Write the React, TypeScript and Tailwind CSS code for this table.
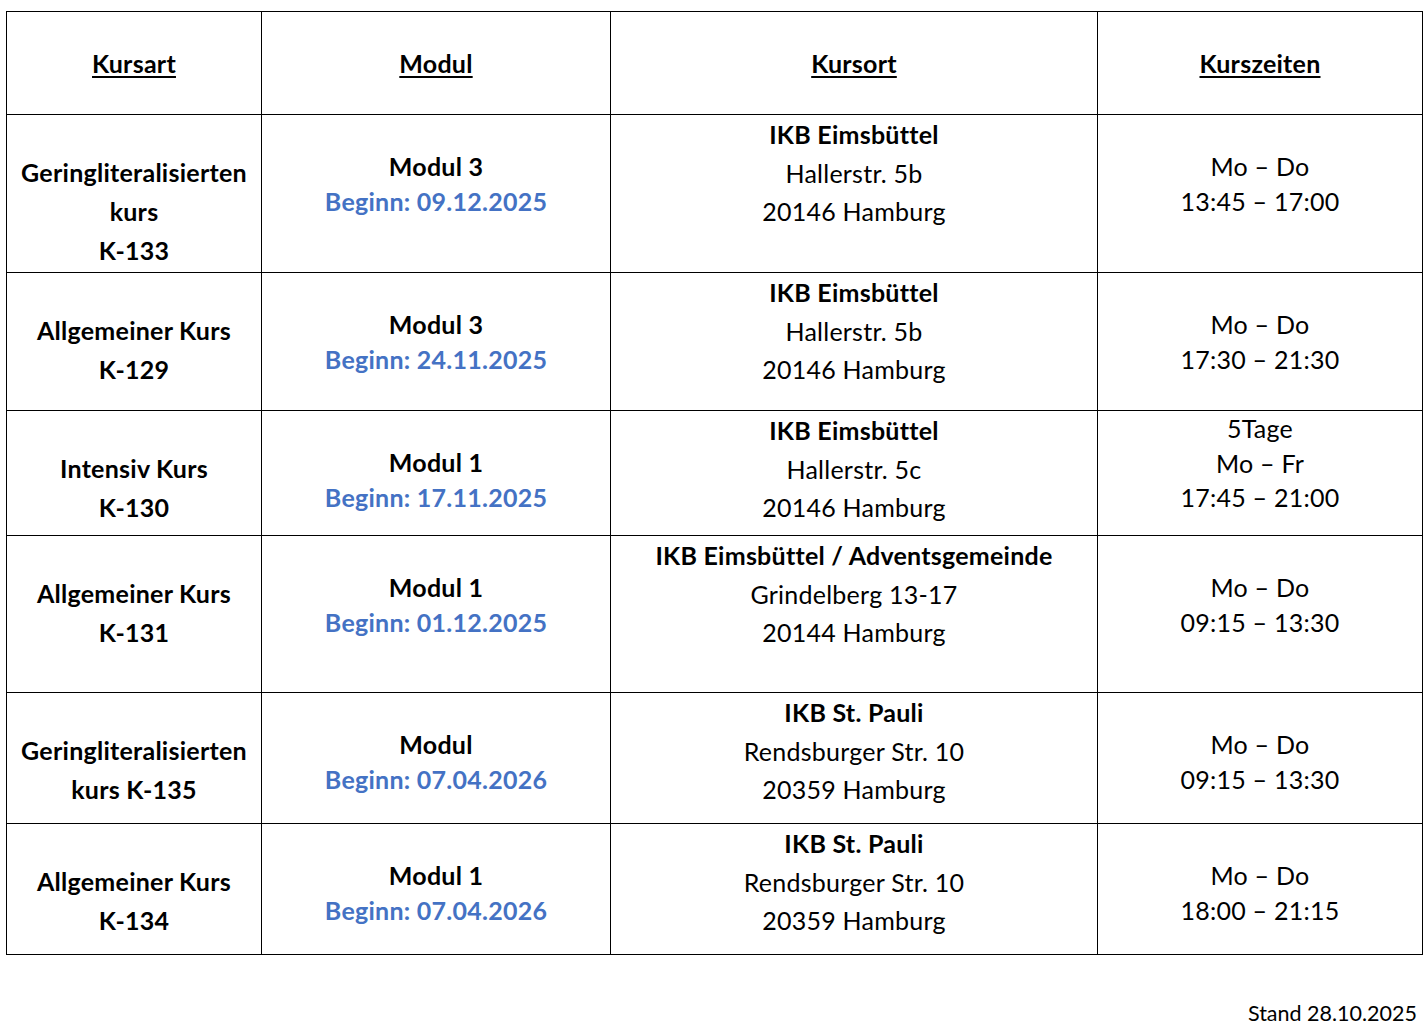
import React from "react";

type Row = {
  h: string;
  c1: string[];
  modul: string;
  beginn: string;
  ort: [string, string, string];
  zeiten: string[];
};

const rows: Row[] = [
  { h: "h-[158px]", c1: ["Geringliteralisierten", "kurs", "K-133"], modul: "Modul 3", beginn: "Beginn: 09.12.2025", ort: ["IKB Eimsbüttel", "Hallerstr. 5b", "20146 Hamburg"], zeiten: ["Mo – Do", "13:45 – 17:00"] },
  { h: "h-[138px]", c1: ["Allgemeiner Kurs", "K-129"], modul: "Modul 3", beginn: "Beginn: 24.11.2025", ort: ["IKB Eimsbüttel", "Hallerstr. 5b", "20146 Hamburg"], zeiten: ["Mo – Do", "17:30 – 21:30"] },
  { h: "h-[125px]", c1: ["Intensiv Kurs", "K-130"], modul: "Modul 1", beginn: "Beginn: 17.11.2025", ort: ["IKB Eimsbüttel", "Hallerstr. 5c", "20146 Hamburg"], zeiten: ["5Tage", "Mo – Fr", "17:45 – 21:00"] },
  { h: "h-[157px]", c1: ["Allgemeiner Kurs", "K-131"], modul: "Modul 1", beginn: "Beginn: 01.12.2025", ort: ["IKB Eimsbüttel / Adventsgemeinde", "Grindelberg 13-17", "20144 Hamburg"], zeiten: ["Mo – Do", "09:15 – 13:30"] },
  { h: "h-[131px]", c1: ["Geringliteralisierten", "kurs K-135"], modul: "Modul", beginn: "Beginn: 07.04.2026", ort: ["IKB St. Pauli", "Rendsburger Str. 10", "20359 Hamburg"], zeiten: ["Mo – Do", "09:15 – 13:30"] },
  { h: "h-[131px]", c1: ["Allgemeiner Kurs", "K-134"], modul: "Modul 1", beginn: "Beginn: 07.04.2026", ort: ["IKB St. Pauli", "Rendsburger Str. 10", "20359 Hamburg"], zeiten: ["Mo – Do", "18:00 – 21:15"] },
];

const font = { fontFamily: "Lato, 'Open Sans', sans-serif" };

export default function App() {
  return (
    <div className="w-[1428px] h-[1026px] bg-white text-black pt-[11px] pl-[6px]" style={font}>
      <div className="w-[1417px] border-l border-t border-black text-[25px] tracking-[0.25px]">
        <div className="flex h-[103px]">
          {[
            ["Kursart", "w-[255px]"],
            ["Modul", "w-[349px]"],
            ["Kursort", "w-[487px]"],
            ["Kurszeiten", "w-[325px]"],
          ].map(([t, w]) => (
            <div key={t} className={`${w} border-r border-b border-black flex items-center justify-center pt-[2px]`}>
              <span className="font-bold underline decoration-2 underline-offset-[3px]">{t}</span>
            </div>
          ))}
        </div>
        {rows.map((r, i) => (
          <div key={i} className={`flex ${r.h}`}>
            <div className="w-[255px] border-r border-b border-black pt-[38px] text-center font-bold leading-[39px] whitespace-nowrap">
              {r.c1.map((l) => (
                <div key={l}>{l}</div>
              ))}
            </div>
            <div className="w-[349px] border-r border-b border-black pt-[34px] text-center font-bold leading-[35px]">
              <div>{r.modul}</div>
              <div className="text-[#4472c4]">{r.beginn}</div>
            </div>
            <div className="w-[487px] border-r border-b border-black text-center leading-[38.5px] whitespace-nowrap">
              <div className="font-bold">{r.ort[0]}</div>
              <div>{r.ort[1]}</div>
              <div>{r.ort[2]}</div>
            </div>
            <div className={`w-[325px] border-r border-b border-black text-center leading-[34.5px] ${r.zeiten.length === 3 ? "pt-0" : "pt-[34px]"}`}>
              {r.zeiten.map((l) => (
                <div key={l}>{l}</div>
              ))}
            </div>
          </div>
        ))}
      </div>
      <div className="mt-[46px] pr-[11px] text-right text-[21.5px] leading-[24px]">Stand 28.10.2025</div>
    </div>
  );
}
